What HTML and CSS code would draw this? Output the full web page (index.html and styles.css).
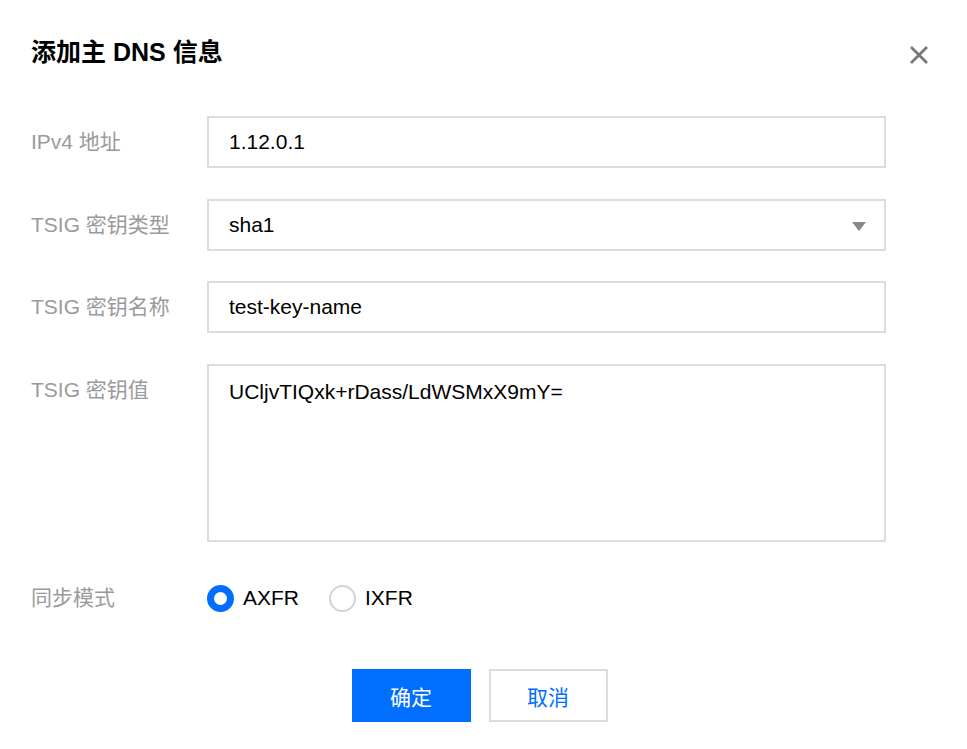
FILE: index.html
```html
<!DOCTYPE html>
<html lang="zh-CN">
<head>
<meta charset="utf-8">
<title>添加主 DNS 信息</title>
<link rel="stylesheet" href="styles.css">
</head>
<body>
<div class="dialog">
  <div class="header">
    <h1 class="title">添加主 DNS 信息</h1>
    <button class="close" aria-label="关闭">
      <svg viewBox="0 0 20 20" width="20" height="20"><path d="M2 2 L18 18 M18 2 L2 18" stroke="#777" stroke-width="2.8" stroke-linecap="butt" fill="none"/></svg>
    </button>
  </div>
  <div class="form">
    <div class="label">IPv4 地址</div>
    <div class="control"><div class="input">1.12.0.1</div></div>

    <div class="label">TSIG 密钥类型</div>
    <div class="control"><div class="input select">sha1<span class="caret"></span></div></div>

    <div class="label">TSIG 密钥名称</div>
    <div class="control"><div class="input">test-key-name</div></div>

    <div class="label">TSIG 密钥值</div>
    <div class="control"><div class="textarea">UCljvTIQxk+rDass/LdWSMxX9mY=</div></div>

    <div class="label">同步模式</div>
    <div class="control radios">
      <label class="radio"><span class="dot checked"></span>AXFR</label>
      <label class="radio"><span class="dot"></span>IXFR</label>
    </div>
  </div>
  <div class="footer">
    <button class="btn primary">确定</button>
    <button class="btn">取消</button>
  </div>
</div>
</body>
</html>
```
FILE: styles.css
```css
html, body {
  margin: 0;
  padding: 0;
  background: #fff;
}
body {
  font-family: "Liberation Sans", "Noto Sans CJK SC", sans-serif;
  color: #000;
}
.dialog {
  padding: 28px 37px 0 31px;
}
.header {
  display: flex;
  justify-content: space-between;
  align-items: center;
  height: 48px;
}
.title {
  margin: 0;
  font-size: 25px;
  font-weight: bold;
  line-height: 48px;
  color: #000;
}
.close {
  border: 0;
  background: none;
  padding: 0;
  width: 22px;
  height: 22px;
  margin-top: 6px;
  display: flex;
  align-items: center;
  justify-content: center;
}
.form {
  margin-top: 40px;
  display: grid;
  grid-template-columns: 176px 679px;
  row-gap: 30.6px;
}
.label {
  font-size: 21px;
  line-height: 52px;
  color: #9a9a9a;
  white-space: nowrap;
}
.input, .textarea {
  box-sizing: border-box;
  border: 2px solid #dcdcdc;
  font-size: 21px;
  padding: 0 20px;
  color: #000;
}
.input {
  height: 52px;
  line-height: 48px;
  position: relative;
}
.textarea {
  height: 178px;
  line-height: 26px;
  padding-top: 13px;
}
.caret {
  position: absolute;
  right: 18px;
  top: 21px;
  width: 0;
  height: 0;
  border-left: 7px solid transparent;
  border-right: 7px solid transparent;
  border-top: 9px solid #888;
}
.radios {
  display: flex;
  align-items: center;
  height: 52px;
  gap: 30px;
}
.radio {
  display: flex;
  align-items: center;
  font-size: 21px;
  color: #000;
  gap: 9px;
}
.dot {
  box-sizing: border-box;
  width: 27px;
  height: 27px;
  border-radius: 50%;
  border: 2px solid #d2d2d8;
}
.dot.checked {
  border: 7px solid #006eff;
}
.footer {
  margin-top: 45px;
  display: flex;
  justify-content: center;
  gap: 18px;
  padding-right: 2px;
}
.btn {
  box-sizing: border-box;
  width: 119px;
  height: 53px;
  font-family: "Liberation Sans", "Noto Sans CJK SC", sans-serif;
  font-size: 21px;
  border: 2px solid #dcdcdc;
  background: #fff;
  color: #006eff;
}
.btn.primary {
  background: #006eff;
  border-color: #006eff;
  color: #fff;
}
```
